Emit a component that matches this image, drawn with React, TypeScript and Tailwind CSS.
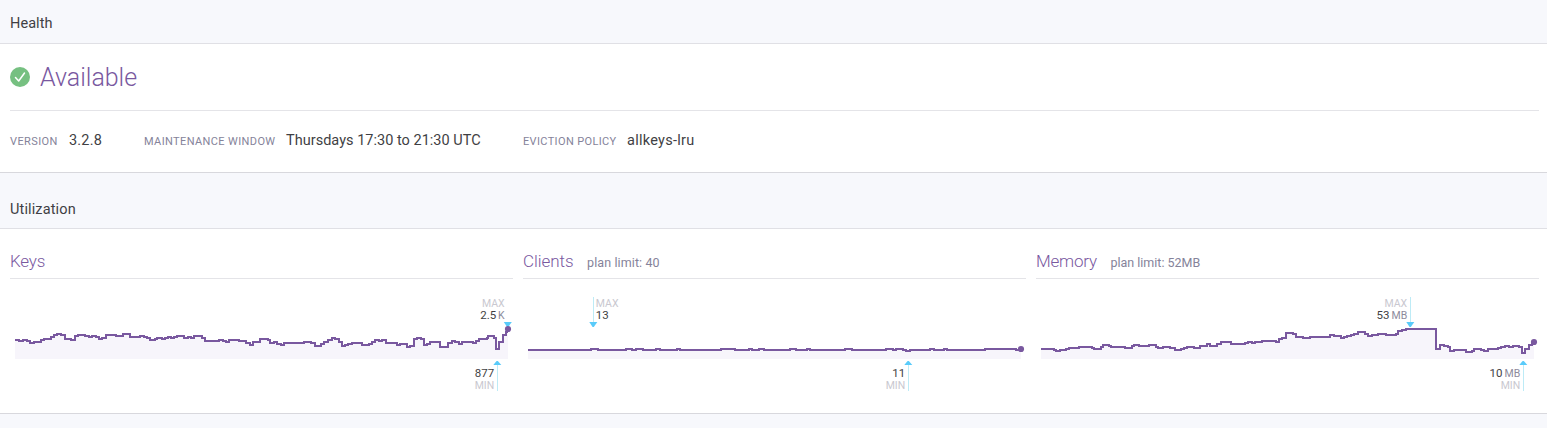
import React from "react";

type Point = [number, number];

interface Marker {
  x: number;
  label: string;
  value: string;
  unit?: string;
  side: "left" | "right";
  line?: boolean;
}

interface Metric {
  name: string;
  limit?: string;
  nameClass: string;
  limitClass?: string;
  points: Point[];
  end: Point;
  max: Marker;
  min: Marker;
}

// Samples are stored in thirds of a pixel, measured from the chart's top left.
const parse = (data: string): Point[] =>
  data.split(";").map((pair) => pair.split(",").map((n) => Number(n) / 3) as Point);

const keys = parse(
  "0,150;12,153;24,150;36,153;45,159;58,156;79,150;87,147;108,141;117,135;127,132;139,135;150,147;168,150;181,138;189,135;210,138;222,141;231,138;242,141;252,147;262,144;273,135;303,138;324,132;345,141;375,138;386,141;397,144;405,150;419,147;427,144;440,147;450,144;458,141;468,144;477,141;487,138;508,144;518,141;528,144;537,138;562,144;571,153;612,150;623,153;633,156;642,150;672,153;693,159;705,165;714,156;735,147;759,150;766,159;777,156;786,162;798,165;808,159;867,156;889,159;900,168;917,162;928,156;938,150;950,144;961,147;972,156;982,168;991,165;1000,162;1010,159;1042,165;1062,162;1072,156;1080,150;1092,153;1101,150;1112,159;1146,165;1155,162;1176,171;1185,168;1197,147;1207,144;1218,147;1227,165;1237,162;1246,156;1276,171;1300,159;1310,153;1321,156;1331,162;1341,156;1375,159;1383,153;1393,147;1415,144;1420,138;1437,144;1443,177;1453,156;1463,135;1473,126"
);

const clients = parse(
  "0,180;189,177;210,180;294,177;312,180;324,177;345,180;384,177;396,180;447,177;456,180;579,177;621,180;663,177;672,180;693,177;708,180;786,177;804,180;837,177;846,180;951,177;972,180;1074,177;1095,180;1105,177;1125,180;1135,183;1146,180;1206,177;1218,180;1248,177;1257,180;1371,177;1464,180"
);

const memory = parse(
  "0,177;39,180;45,183;58,180;75,177;84,174;114,171;153,174;160,177;180,171;186,165;204,168;210,171;252,174;273,168;280,165;294,168;324,165;345,171;352,174;366,171;387,174;402,180;420,177;429,174;438,171;459,174;477,168;497,162;507,168;528,162;539,156;571,162;612,159;620,156;632,159;642,156;662,153;705,156;714,147;723,144;735,129;756,132;766,141;785,144;807,141;867,135;879,138;900,144;909,141;918,138;929,135;940,132;951,126;972,132;980,138;993,135;1011,132;1035,135;1064,132;1072,124;1083,121;1095,117;1185,177;1197,165;1209,168;1221,171;1227,183;1240,180;1276,186;1293,183;1298,177;1320,180;1329,183;1342,177;1371,174;1381,171;1392,168;1404,171;1416,168;1434,171;1443,189;1453,177;1464,165;1472,162"
);

const metrics: Metric[] = [
  {
    name: "Keys",
    nameClass: "tracking-[-0.2px]",
    points: keys,
    end: [493, 39],
    max: { x: 493, label: "MAX", value: "2.5", unit: "K", side: "left", line: false },
    min: { x: 482.5, label: "MIN", value: "877", side: "left" },
  },
  {
    name: "Clients",
    nameClass: "tracking-[-0.05px]",
    limit: "plan limit: 40",
    limitClass: "tracking-[0.1px]",
    points: clients,
    end: [493, 59],
    max: { x: 65.5, label: "MAX", value: "13", side: "right" },
    min: { x: 380.5, label: "MIN", value: "11", side: "left" },
  },
  {
    name: "Memory",
    nameClass: "tracking-[-0.2px]",
    limit: "plan limit: 52MB",
    limitClass: "tracking-[0px]",
    points: memory,
    end: [493, 52],
    max: { x: 369.5, label: "MAX", value: "53", unit: "MB", side: "left" },
    min: { x: 482.5, label: "MIN", value: "10", unit: "MB", side: "left" },
  },
];

function stepPath(points: Point[], end: Point) {
  const [first, ...rest] = points;
  return `M${first[0]} ${first[1]}` + rest.map(([x, y]) => `H${x}V${y}`).join("") + `H${end[0] - 1}V${end[1]}`;
}

function MarkerShape({ marker, kind }: { marker: Marker; kind: "max" | "min" }) {
  const { x, side, label, value, unit, line = true } = marker;
  const top = kind === "max";
  const tx = side === "left" ? x - 3.3 : x + 2.3;
  const anchor = side === "left" ? "end" : "start";
  return (
    <g>
      {line && <path d={top ? `M${x} 7V33` : `M${x} 73V101`} stroke="#bdebf6" strokeWidth="1" />}
      <path
        d={
          top
            ? `M${x - 4.2} 32H${x + 3.8}L${x + 0.3} 37H${x - 0.9}Z`
            : `M${x - 4.2} 75H${x + 3.8}L${x + 0.3} 71H${x - 0.9}Z`
        }
        fill="#59cbfa"
      />
      <text x={tx} y={top ? 17 : 99} textAnchor={anchor} fill="#c9c8d0" className="text-[10.5px]">
        {label}
      </text>
      <text x={tx} y={top ? 29 : 87} textAnchor={anchor} fill="#3f3f44" className="text-[11.5px]">
        {value}
        {unit && (
          <tspan dx={unit === "K" ? 1.8 : 2} fill="#8c8a9c" className="text-[10.5px]">
            {unit}
          </tspan>
        )}
      </text>
    </g>
  );
}

function Chart({ metric }: { metric: Metric }) {
  const line = stepPath(metric.points, metric.end);
  return (
    <svg width="498" height="110" viewBox="0 0 498 110" className="ml-[5px] mt-[11px] block overflow-visible">
      <path d={`${line}H493V69H0Z`} fill="#f7f5fb" />
      <path d={line} fill="none" stroke="#79589f" strokeWidth="2" shapeRendering="crispEdges" />
      <MarkerShape marker={metric.max} kind="max" />
      <MarkerShape marker={metric.min} kind="min" />
      <circle cx={metric.end[0]} cy={metric.end[1]} r="3.1" fill="#79589f" />
    </svg>
  );
}

function Detail({ label, value, labelClass, valueClass }: { label: string; value: string; labelClass: string; valueClass: string }) {
  return (
    <div className="flex items-baseline">
      <dt className={`shrink-0 whitespace-nowrap text-[11px] text-[#85839a] ${labelClass}`}>{label}</dt>
      <dd className={`whitespace-nowrap text-[14.5px] text-[#3f3f44] ${valueClass}`}>{value}</dd>
    </div>
  );
}

export default function App() {
  return (
    <main className="h-[428px] overflow-hidden bg-[#f7f8fc] font-[Roboto,sans-serif]">
      <h2 className="flex h-[43px] items-center pl-2.5 pt-[5px] text-[14.5px] tracking-[0.05px] text-[#3f3f44]">Health</h2>
      <section className="h-[130px] border-y border-[#e0e0e5] border-b-[#d8d8dd] bg-white pl-2.5 pr-2">
        <div className="flex h-[67px] items-center gap-2.5 border-b border-[#e4e4e8]">
          <svg width="20" height="20" viewBox="0 0 20 20" className="shrink-0">
            <circle cx="10" cy="10" r="10" fill="#76c081" />
            <path d="M5.5 10.6 8.7 14 14.5 6" fill="none" stroke="#fff" strokeWidth="1.5" strokeLinecap="round" strokeLinejoin="round" />
          </svg>
          <span className="pt-0.5 text-[25px] font-light tracking-[-0.02px] text-[#79589f]">Available</span>
        </div>
        <dl className="flex h-[59px] items-center">
          <Detail label="VERSION" value="3.2.8" labelClass="w-[59px] tracking-[0.4px]" valueClass="w-[75px] tracking-[0.2px]" />
          <Detail
            label="MAINTENANCE WINDOW"
            value="Thursdays 17:30 to 21:30 UTC"
            labelClass="w-[142px] tracking-[0.38px]"
            valueClass="w-[237px] tracking-[0.02px]"
          />
          <Detail label="EVICTION POLICY" value="allkeys-lru" labelClass="w-[104px] tracking-[0.36px]" valueClass="tracking-[0.27px]" />
        </dl>
      </section>
      <h2 className="flex h-[55px] items-center pl-2.5 pt-[19px] text-[14.5px] tracking-[0.13px] text-[#3f3f44]">Utilization</h2>
      <section className="grid h-[186px] grid-cols-3 gap-2.5 border-y border-[#e0e0e5] border-b-[#d8d8dd] bg-white pl-2.5 pr-2 pt-4">
        {metrics.map((metric) => (
          <div key={metric.name}>
            <div className="flex h-[34px] items-baseline gap-[13.5px] border-b border-[#e4e4e8] pt-1">
              <h3 className={`text-[17px] font-light text-[#79589f] ${metric.nameClass}`}>{metric.name}</h3>
              {metric.limit && <span className={`text-[12.5px] text-[#85839a] ${metric.limitClass}`}>{metric.limit}</span>}
            </div>
            <Chart metric={metric} />
          </div>
        ))}
      </section>
    </main>
  );
}
